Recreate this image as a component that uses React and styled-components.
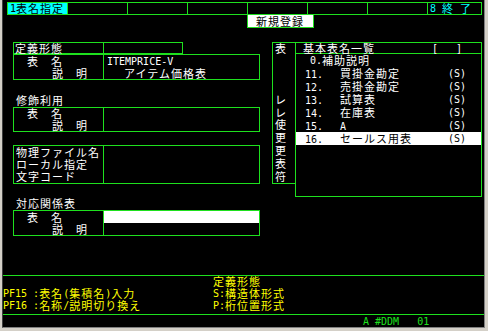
import React from "react";
import styled, { createGlobalStyle } from "styled-components";

const G = "#1ee01e";
const CYAN = "#00ffff";
const YELLOW = "#ffff00";

const Global = createGlobalStyle`
  *, *::before, *::after { box-sizing: border-box; }
  html, body { margin: 0; padding: 0; background: #d4d0c8; }
  body { width: 488px; height: 331px; overflow: hidden; }
`;

const Frame = styled.div`
  width: 488px;
  height: 331px;
  padding: 0 3px 3px 2px;
  background: #d4d0c8;
`;

const Screen = styled.div`
  height: 328px;
  border-left: 1px solid #404040;
  border-right: 1px solid #808080;
  border-bottom: 1px solid #808080;
  background: #000;
  display: flex;
  flex-direction: column;
  font-family: "Noto Sans CJK JP", sans-serif;
  font-size: 11px;
  letter-spacing: 1px;
  line-height: 11px;
  color: #fff;
`;

const Half = styled.span`
  display: inline-block;
  line-height: 11px;
  font-family: "DejaVu Sans Mono", "Liberation Mono", monospace;
  font-size: 10px;
  letter-spacing: 0;
  white-space: pre;
`;
const Full = styled.span`
  display: inline-block;
  line-height: 11px;
  white-space: pre;
`;

const T = ({ children }) => {
  const s = String(children ?? "");
  const parts = s.match(/[\x20-\x7e]+|[^\x20-\x7e]+/g) || [];
  return (
    <>
      {parts.map((p, i) =>
        /^[\x20-\x7e]/.test(p) ? <Half key={i}>{p}</Half> : <Full key={i}>{p}</Full>
      )}
    </>
  );
};

/* top function bar */
const TopBar = styled.div`
  margin: 2px 0 0 4px;
  width: 475px;
  height: 13px;
  border: 1px solid ${G};
  display: grid;
  grid-template-columns: repeat(7, 60px) 1fr;
`;
const TopCell = styled.div`
  border-right: 1px solid ${G};
  &:last-child { border-right: none; }
  background: ${(p) => (p.$active ? CYAN : "transparent")};
  color: ${(p) => (p.$active ? "#000" : CYAN)};
  padding-left: 2px;
  display: flex;
  align-items: center;
  white-space: pre;
`;

const NewReg = styled.div`
  margin-left: 244px;
  width: 67px;
  height: 13px;
  border: 1px solid ${G};
  border-top: none;
  background: #fff;
  color: #000;
  padding-left: 8px;
  display: flex;
  align-items: center;
`;

/* main area */
const Main = styled.div`
  display: flex;
  gap: 12px;
  margin: 14px 0 0 10px;
`;
const LeftCol = styled.div`
  width: 247px;
  display: flex;
  flex-direction: column;
`;
const Box = styled.div`
  width: ${(p) => p.$w || 247}px;
  height: ${(p) => p.$h}px;
  margin-top: ${(p) => p.$mt || 0}px;
  border: 1px solid ${G};
  display: grid;
  grid-template-columns: 90px 1fr;
  grid-template-rows: repeat(${(p) => p.$rows}, 1fr);
`;
const LabelCell = styled.div`
  border-right: 1px solid ${G};
  padding-left: ${(p) => (p.$indent ?? 1)}px;
  display: flex;
  align-items: center;
  white-space: pre;
`;
const ValueCell = styled.div`
  padding-left: ${(p) => (p.$indent ?? 3)}px;
  display: flex;
  align-items: center;
  white-space: pre;
  background: ${(p) => (p.$hl ? "#fff" : "transparent")};
`;
const SectionLabel = styled.div`
  margin-top: 13px;
  height: ${(p) => p.$h || 13}px;
  padding-left: 3px;
  display: flex;
  align-items: center;
`;

const RightCol = styled.div`
  display: flex;
  align-items: flex-start;
`;
const VertCol = styled.div`
  width: 23px;
  height: 142px;
  border: 1px solid ${G};
  border-right: none;
  display: grid;
  grid-template-rows: 11px repeat(10, 1fr);
  padding-left: 2px;
`;
const VChar = styled.div`
  display: flex;
  align-items: center;
`;
const List = styled.div`
  width: 187px;
  height: 155px;
  border: 1px solid ${G};
`;
const ListHead = styled.div`
  height: 11px;
  border-bottom: 1px solid ${G};
  display: flex;
  align-items: center;
  padding-left: 7px;
`;
const HeadTitle = styled.span`
  width: 129px;
`;
const ListRow = styled.div`
  height: 13px;
  display: flex;
  align-items: center;
  padding-left: ${(p) => (p.$indent ?? 9)}px;
  background: ${(p) => (p.$hl ? "#fff" : "transparent")};
  color: ${(p) => (p.$hl ? "#000" : "#fff")};
`;
const Num = styled.span`
  width: 35px;
`;
const Name = styled.span`
  width: 108px;
`;

/* footer */
const Footer = styled.div`
  margin-top: auto;
  border-top: 1px solid ${G};
  border-bottom: 1px solid ${G};
  padding-bottom: 3px;
  display: grid;
  grid-template-columns: 210px 1fr;
  grid-template-rows: 11px repeat(2, 12px);
  color: ${YELLOW};
`;
const FootCell = styled.div`
  white-space: pre;
  display: flex;
  align-items: center;
`;
const Status = styled.div`
  height: 12px;
  padding-left: 360px;
  color: ${G};
  display: flex;
  align-items: center;
`;

const topCells = ["1表名指定", "", "", "", "", "", "", "8 終 了"];

const items = [
  { n: "11.", name: "買掛金勘定" },
  { n: "12.", name: "売掛金勘定" },
  { n: "13.", name: "試算表" },
  { n: "14.", name: "在庫表" },
  { n: "15.", name: "A" },
  { n: "16.", name: "セールス用表", hl: true },
];

const vchars = ["", "", "", "レ", "レ", "使", "更", "更", "表", "符"];

export default function App() {
  return (
    <>
      <Global />
      <Frame>
        <Screen>
          <TopBar>
            {topCells.map((c, i) => (
              <TopCell key={i} $active={i === 0}>
                <T>{c}</T>
              </TopCell>
            ))}
          </TopBar>
          <NewReg><T>新規登録</T></NewReg>

          <Main>
            <LeftCol>
              <Box $w={170} $h={12} $rows={1}>
                <LabelCell $indent={1}><T>定義形態</T></LabelCell>
                <ValueCell />
              </Box>
              <Box $h={26} $rows={2}>
                <LabelCell $indent={13}><T>表　名</T></LabelCell>
                <ValueCell><T>ITEMPRICE-V</T></ValueCell>
                <LabelCell $indent={38}><T>説　明</T></LabelCell>
                <ValueCell $indent={20}><T>アイテム価格表</T></ValueCell>
              </Box>

              <SectionLabel $h={14}><T>修飾利用</T></SectionLabel>
              <Box $h={25} $rows={2}>
                <LabelCell $indent={13}><T>表　名</T></LabelCell>
                <ValueCell />
                <LabelCell $indent={38}><T>説　明</T></LabelCell>
                <ValueCell />
              </Box>

              <Box $mt={13} $h={39} $rows={3}>
                <LabelCell $indent={2}><T>物理ファイル名</T></LabelCell>
                <ValueCell />
                <LabelCell $indent={2}><T>ローカル指定</T></LabelCell>
                <ValueCell />
                <LabelCell $indent={2}><T>文字コード</T></LabelCell>
                <ValueCell />
              </Box>

              <SectionLabel><T>対応関係表</T></SectionLabel>
              <Box $h={26} $rows={2}>
                <LabelCell $indent={13}><T>表　名</T></LabelCell>
                <ValueCell $hl />
                <LabelCell $indent={38}><T>説　明</T></LabelCell>
                <ValueCell />
              </Box>
            </LeftCol>

            <RightCol>
              <VertCol>
                <VChar><T>表</T></VChar>
                {vchars.map((c, i) => (
                  <VChar key={i}><T>{c}</T></VChar>
                ))}
              </VertCol>
              <List>
                <ListHead>
                  <HeadTitle><T>基本表名一覧</T></HeadTitle>
                  <T>{"[   ]"}</T>
                </ListHead>
                <ListRow $indent={14}>
                  <T>0.補助説明</T>
                </ListRow>
                {items.map((it) => (
                  <ListRow key={it.n} $hl={it.hl}>
                    <Num><T>{it.n}</T></Num>
                    <Name><T>{it.name}</T></Name>
                    <T>(S)</T>
                  </ListRow>
                ))}
              </List>
            </RightCol>
          </Main>

          <Footer>
            <FootCell />
            <FootCell><T>定義形態</T></FootCell>
            <FootCell><T>PF15 :表名(集積名)入力</T></FootCell>
            <FootCell><T>S:構造体形式</T></FootCell>
            <FootCell><T>PF16 :名称/説明切り換え</T></FootCell>
            <FootCell><T>P:桁位置形式</T></FootCell>
          </Footer>
          <Status>
            <T>A #DDM   01</T>
          </Status>
        </Screen>
      </Frame>
    </>
  );
}
